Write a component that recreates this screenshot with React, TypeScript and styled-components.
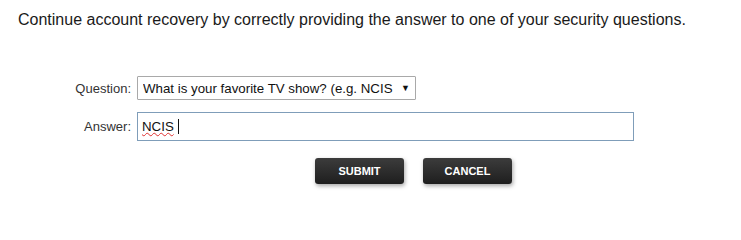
import React from "react";
import styled, { createGlobalStyle } from "styled-components";

const GlobalStyle = createGlobalStyle`
  body {
    margin: 0;
    background: #ffffff;
    font-family: Arial, "Liberation Sans", sans-serif;
  }
`;

const Page = styled.div`
  width: 741px;
  height: 230px;
  background: #ffffff;
`;

const Intro = styled.p`
  margin: 0;
  padding: 10px 0 0 18px;
  font-size: 16px;
  line-height: 20px;
  color: #1a1a1a;
`;

const Form = styled.form`
  display: grid;
  grid-template-columns: 131px auto;
  column-gap: 6px;
  row-gap: 12px;
  align-items: center;
  justify-content: start;
  margin-top: 46px;
`;

const Label = styled.label`
  text-align: right;
  font-size: 13px;
  color: #333333;
`;

const SelectBox = styled.div`
  display: flex;
  align-items: center;
  justify-content: space-between;
  box-sizing: border-box;
  width: 279px;
  height: 24px;
  padding: 0 5px 0 5px;
  border: 1px solid #a9a9a9;
  border-radius: 1px;
  font-size: 13.3px;
  color: #111111;
  white-space: nowrap;
  overflow: hidden;
`;

const SelectText = styled.span`
  overflow: hidden;
`;

const Arrow = styled.span`
  margin-left: 8px;
  font-size: 9px;
  color: #111111;
`;

const TextBox = styled.div`
  display: flex;
  align-items: center;
  box-sizing: border-box;
  width: 497px;
  height: 29px;
  padding: 0 4px;
  border: 1px solid #7f9db9;
  font-size: 13.3px;
  color: #111111;
`;

const Typed = styled.span`
  text-decoration: underline wavy #e03030;
  text-decoration-thickness: 1px;
  text-underline-offset: 1px;
`;

const Caret = styled.span`
  display: inline-block;
  width: 1px;
  height: 15px;
  margin-left: 4px;
  background: #111111;
`;

const Actions = styled.div`
  display: flex;
  gap: 19px;
  padding-left: 315px;
  margin-top: 17px;
`;

const Button = styled.button`
  width: 89px;
  height: 26px;
  padding: 0;
  border: none;
  border-radius: 3px;
  background: linear-gradient(#3c3c3c, #1e1e1e);
  box-shadow: 1px 2px 4px rgba(0, 0, 0, 0.35);
  color: #ffffff;
  font-family: Arial, "Liberation Sans", sans-serif;
  font-size: 11px;
  font-weight: bold;
  cursor: pointer;
`;

export default function App() {
  return (
    <Page>
      <GlobalStyle />
      <Intro>
        Continue account recovery by correctly providing the answer to one of
        your security questions.
      </Intro>
      <Form onSubmit={(e) => e.preventDefault()}>
        <Label>Question:</Label>
        <SelectBox>
          <SelectText>What is your favorite TV show? (e.g. NCIS</SelectText>
          <Arrow>▼</Arrow>
        </SelectBox>
        <Label>Answer:</Label>
        <TextBox>
          <Typed>NCIS</Typed>
          <Caret />
        </TextBox>
      </Form>
      <Actions>
        <Button type="button">SUBMIT</Button>
        <Button type="button">CANCEL</Button>
      </Actions>
    </Page>
  );
}
